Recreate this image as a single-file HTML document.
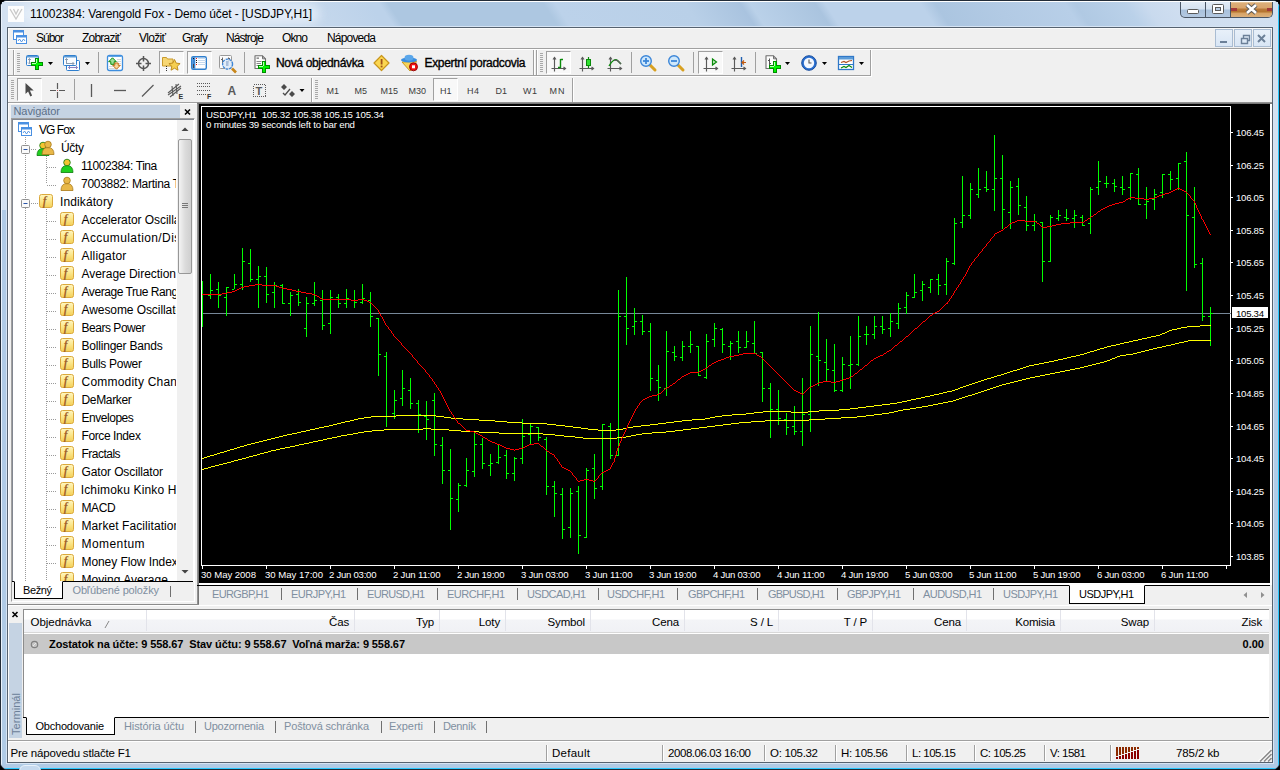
<!DOCTYPE html><html><head><meta charset="utf-8"><title>11002384: Varengold Fox - Demo účet - [USDJPY,H1]</title>
<style>
html,body{margin:0;padding:0;background:#000;}
#w{position:relative;width:1280px;height:770px;overflow:hidden;background:#000;font-family:"Liberation Sans", sans-serif;}
#w div{position:absolute;box-sizing:border-box;}
svg{position:absolute;left:0;top:0;}
svg text{font-family:"Liberation Sans", sans-serif;white-space:pre;}
</style></head><body><div id="w">
<div style="left:0;top:0;width:1280px;height:770px;border:1px solid #222c38;border-radius:7px;background:#b0cbe6;overflow:hidden"><div style="left:0;top:0;width:1278px;height:209px;background:#d3e1f1"></div><div style="left:0;top:0;width:1px;height:768px;background:#e9f2fc"></div><div style="left:0;top:0;width:1278px;height:1px;background:#fff"></div><div style="left:1277px;top:0;width:1px;height:768px;background:#28c8ff"></div><div style="left:0;top:767px;width:1278px;height:1px;background:#28c8ff"></div><div style="left:5px;top:25px;width:1268px;height:738px;border:1px solid #d6e4f4"></div></div>
<div style="left:2px;top:2px;width:1276px;height:24px;overflow:hidden"><div style="left:-22px;top:0;width:1340px;height:24px;transform:skewX(33deg);background:linear-gradient(90deg,#d3e1f1 22px,#d0dff0 272px,#c4d7ec 342px,#bcd2ea 397px,#bcd2ea 406px,#adc7e1 415px,#adc7e1 570px,#bcd2ea 582px,#b9d0e8 712px,#a9c3df 767px,#bad1e9 777px,#aac4df 842px,#bcd2ea 852px,#bcd2ea 947px,#abc5e0 962px,#b2cae4 1022px,#b8cfe8 1092px,#b0c9e3 1102px,#bad1e9 1152px,#c9daee 1172px,#cfdef0 1202px,#d3e1f1 1342px)"></div></div>
<div style="left:20px;top:4px;width:300px;height:20px;border-radius:10px;background:rgba(232,240,249,.75);filter:blur(5px)"></div>
<div style="left:19px;top:765px;width:22px;height:12px;border-radius:11px;border:1px solid #e8f1fb;background:#c6d9ee"></div>
<div style="left:7px;top:27px;width:1266px;height:736px;border:1px solid #56626f;background:#f0f0f0"></div>
<div style="left:8px;top:28px;width:1264px;height:1px;background:#fafafa"></div>
<div style="left:8px;top:28px;width:1px;height:734px;background:#fcfcfc"></div>
<div style="left:8px;top:48px;width:1264px;height:1px;background:#a0a0a0"></div>
<div style="left:8px;top:49px;width:1264px;height:1px;background:#fff"></div>
<div style="left:8px;top:75px;width:863px;height:1px;background:#a0a0a0"></div>
<div style="left:8px;top:76px;width:864px;height:1px;background:#fff"></div>
<div style="left:870px;top:50px;width:1px;height:26px;background:#a0a0a0"></div>
<div style="left:871px;top:50px;width:1px;height:26px;background:#fff"></div>
<div style="left:13px;top:50px;width:1px;height:25px;background:#a0a0a0"></div>
<div style="left:14px;top:50px;width:1px;height:25px;background:#fff"></div>
<div style="left:533px;top:50px;width:1px;height:25px;background:#a0a0a0"></div>
<div style="left:534px;top:50px;width:1px;height:25px;background:#fff"></div>
<div style="left:536px;top:50px;width:1px;height:25px;background:#a0a0a0"></div>
<div style="left:537px;top:50px;width:1px;height:25px;background:#fff"></div>
<div style="left:311px;top:78px;width:1px;height:24px;background:#a0a0a0"></div>
<div style="left:312px;top:78px;width:1px;height:24px;background:#fff"></div>
<div style="left:572px;top:78px;width:1px;height:24px;background:#a0a0a0"></div>
<div style="left:573px;top:78px;width:1px;height:24px;background:#fff"></div>
<div style="left:8px;top:102px;width:1264px;height:1px;background:#a0a0a0"></div>
<div style="left:8px;top:103px;width:189px;height:1px;background:#fff"></div>
<div style="left:159px;top:51px;width:25px;height:23px;background:#f8f8f8;border:1px solid;border-color:#a0a0a0 #fff #fff #a0a0a0"></div>
<div style="left:187px;top:51px;width:25px;height:23px;background:#f8f8f8;border:1px solid;border-color:#a0a0a0 #fff #fff #a0a0a0"></div>
<div style="left:546px;top:51px;width:25px;height:23px;background:#f8f8f8;border:1px solid;border-color:#a0a0a0 #fff #fff #a0a0a0"></div>
<div style="left:698px;top:51px;width:25px;height:23px;background:#f8f8f8;border:1px solid;border-color:#a0a0a0 #fff #fff #a0a0a0"></div>
<div style="left:17px;top:78px;width:25px;height:23px;background:#f8f8f8;border:1px solid;border-color:#a0a0a0 #fff #fff #a0a0a0"></div>
<div style="left:433px;top:78px;width:25px;height:23px;background:#f8f8f8;border:1px solid;border-color:#a0a0a0 #fff #fff #a0a0a0"></div>
<div style="left:11px;top:105px;width:169px;height:13px;background:#c5d3e3"></div>
<div style="left:11px;top:118px;width:184px;height:484px;border:1px solid #a0a0a0;border-color:#a0a0a0 #fff #fff #a0a0a0;background:#f0f0f0"></div>
<div style="left:12px;top:119px;width:182px;height:463px;background:#fff;border:1px solid #828790;border-width:1px 0 0 1px"></div>
<div style="left:177px;top:120px;width:16px;height:461px;background:#f0f0f0"></div>
<div style="left:178px;top:139px;width:14px;height:135px;border:1px solid #979797;border-radius:2px;background:linear-gradient(90deg,#f4f4f4,#dcdcdc 50%,#cfcfcf)"></div>
<div style="left:12px;top:581px;width:181px;height:1px;background:#000"></div>
<div style="left:14px;top:581px;width:49px;height:18px;background:#fff;border:1px solid #000;border-top:1px solid #fff"></div>
<div style="left:197px;top:102px;width:1075px;height:2px;background:linear-gradient(180deg,#a0a0a0,#696969)"></div>
<div style="left:197px;top:104px;width:2px;height:481px;background:linear-gradient(90deg,#a0a0a0,#696969)"></div>
<div style="left:199px;top:104px;width:1071px;height:479px;background:#000"></div>
<div style="left:1270px;top:104px;width:2px;height:481px;background:#fff"></div>
<div style="left:199px;top:583px;width:1073px;height:2px;background:#fff"></div>
<div style="left:197px;top:585px;width:1073px;height:1px;background:#000"></div>
<div style="left:197px;top:586px;width:2px;height:19px;background:linear-gradient(90deg,#a0a0a0,#696969)"></div>
<div style="left:1069px;top:585px;width:76px;height:19px;background:#fff;border:1px solid #000;border-top:1px solid #fff"></div>
<div style="left:8px;top:605px;width:1264px;height:1px;background:#fff"></div>
<div style="left:8px;top:604px;width:191px;height:1px;background:#8c8c8c"></div>
<div style="left:9px;top:623px;width:13px;height:115px;background:#c5d3e3"></div>
<div style="left:23px;top:609px;width:1246px;height:109px;background:#fff;border:1px solid #8c8c8c;border-width:1px 0 0 1px"></div>
<div style="left:24px;top:610px;width:1245px;height:23px;background:linear-gradient(180deg,#fff 0,#fff 9px,#f3f4f7 10px,#f0f1f5 22px);border-bottom:1px solid #d8d8d8"></div>
<div style="left:146px;top:610px;width:1px;height:21px;background:#e2e3ea"></div>
<div style="left:354px;top:610px;width:1px;height:21px;background:#e2e3ea"></div>
<div style="left:439px;top:610px;width:1px;height:21px;background:#e2e3ea"></div>
<div style="left:505px;top:610px;width:1px;height:21px;background:#e2e3ea"></div>
<div style="left:590px;top:610px;width:1px;height:21px;background:#e2e3ea"></div>
<div style="left:684px;top:610px;width:1px;height:21px;background:#e2e3ea"></div>
<div style="left:778px;top:610px;width:1px;height:21px;background:#e2e3ea"></div>
<div style="left:872px;top:610px;width:1px;height:21px;background:#e2e3ea"></div>
<div style="left:966px;top:610px;width:1px;height:21px;background:#e2e3ea"></div>
<div style="left:1060px;top:610px;width:1px;height:21px;background:#e2e3ea"></div>
<div style="left:1154px;top:610px;width:1px;height:21px;background:#e2e3ea"></div>
<div style="left:24px;top:634px;width:1245px;height:20px;background:#c8c8c8"></div>
<div style="left:23px;top:717px;width:1246px;height:1px;background:#000"></div>
<div style="left:26px;top:717px;width:89px;height:18px;background:#fff;border:1px solid #000;border-top:1px solid #fff"></div>
<div style="left:8px;top:740px;width:1264px;height:1px;background:#a0a0a0"></div>
<div style="left:8px;top:741px;width:1264px;height:1px;background:#fff"></div>
<div style="left:546px;top:745px;width:1px;height:16px;background:#a0a0a0"></div><div style="left:547px;top:745px;width:1px;height:16px;background:#fff"></div>
<div style="left:662px;top:745px;width:1px;height:16px;background:#a0a0a0"></div><div style="left:663px;top:745px;width:1px;height:16px;background:#fff"></div>
<div style="left:764px;top:745px;width:1px;height:16px;background:#a0a0a0"></div><div style="left:765px;top:745px;width:1px;height:16px;background:#fff"></div>
<div style="left:835px;top:745px;width:1px;height:16px;background:#a0a0a0"></div><div style="left:836px;top:745px;width:1px;height:16px;background:#fff"></div>
<div style="left:906px;top:745px;width:1px;height:16px;background:#a0a0a0"></div><div style="left:907px;top:745px;width:1px;height:16px;background:#fff"></div>
<div style="left:974px;top:745px;width:1px;height:16px;background:#a0a0a0"></div><div style="left:975px;top:745px;width:1px;height:16px;background:#fff"></div>
<div style="left:1044px;top:745px;width:1px;height:16px;background:#a0a0a0"></div><div style="left:1045px;top:745px;width:1px;height:16px;background:#fff"></div>
<div style="left:1110px;top:745px;width:1px;height:16px;background:#a0a0a0"></div><div style="left:1111px;top:745px;width:1px;height:16px;background:#fff"></div>
<div style="left:1180px;top:2px;width:93px;height:16px;border:1px solid #4a5665;border-top:none;border-radius:0 0 5px 5px;background:linear-gradient(180deg,#e3ecf6 0,#d5e2f0 7px,#a9c1dc 8px,#b4c9e1 15px);overflow:hidden"><div style="left:24px;top:0;width:1px;height:18px;background:#4a5665"></div><div style="left:49px;top:0;width:1px;height:18px;background:#4a5665"></div><div style="left:50px;top:0;width:43px;height:18px;background:linear-gradient(180deg,#f1dcb4 0,#dcae7a 1px,#d9a56c 6px,#b97a3a 7px,#b5742f 10px,#d6a264 11px,#dcb07c 15px)"></div><div style="left:50px;top:6px;width:6px;height:3px;background:#a33a3a"></div><div style="left:86px;top:6px;width:6px;height:3px;background:#a33a3a"></div></div>
<div style="left:1215px;top:29px;width:18px;height:18px;border:1px solid #a9bcd2;background:linear-gradient(180deg,#e8f0f9,#d9e6f5)"></div>
<div style="left:1234px;top:29px;width:18px;height:18px;border:1px solid #a9bcd2;background:linear-gradient(180deg,#e8f0f9,#d9e6f5)"></div>
<div style="left:1253px;top:29px;width:18px;height:18px;border:1px solid #a9bcd2;background:linear-gradient(180deg,#e8f0f9,#d9e6f5)"></div>
<svg width="1280" height="770" viewBox="0 0 1280 770">
<rect x="8" y="6" width="16" height="16" fill="#fdfdfd"/>
<path d="M10 9 L16 19 L22 9 M13.5 9 L16 14 L18.5 9" stroke="#c9c9c9" stroke-width="1.3" fill="none"/>
<text x="30" y="18" font-size="12" fill="#000" textLength="282" lengthAdjust="spacing">11002384: Varengold Fox - Demo účet - [USDJPY,H1]</text>
<rect x="1187.5" y="9.5" width="11" height="4" rx="1" fill="#fff" stroke="#5a5a5a"/>
<rect x="1212.5" y="4.5" width="11" height="9" rx="1" fill="#fff" stroke="#5a5a5a"/><rect x="1215.5" y="7.5" width="5" height="3" fill="#b9cde4" stroke="#5a5a5a"/>
<path d="M1247 5 L1256 13 M1256 5 L1247 13" stroke="#5a5a5a" stroke-width="4.4"/><path d="M1247 5 L1256 13 M1256 5 L1247 13" stroke="#fff" stroke-width="2.6"/>
<rect x="1220" y="41" width="7" height="2" fill="#6c8098"/>
<path d="M1241.5 38.5 h6 v5 h-6 z M1243.5 38 v-2.5 h6 v5 h-2" fill="none" stroke="#6c8098" stroke-width="1.4"/>
<path d="M1258 35 L1265 42 M1265 35 L1258 42" stroke="#6c8098" stroke-width="2"/>
<g transform="translate(13,30)"><rect x="0.5" y="0.5" width="10" height="9" fill="#fff" stroke="#4a90e2"/><rect x="0.5" y="0.5" width="10" height="2" fill="#4a90e2"/><rect x="3.5" y="5.5" width="10" height="8" fill="#fff" stroke="#4a90e2"/><rect x="3.5" y="5.5" width="10" height="2" fill="#4a90e2"/><path d="M5 11 l1.5 -2 l2 3 l2 -3 l1.5 2" stroke="#4a90e2" fill="none" stroke-width="0.9"/></g>
<text x="36" y="42" font-size="12" fill="#000" textLength="28" lengthAdjust="spacing">Súbor</text>
<text x="82" y="42" font-size="12" fill="#000" textLength="39" lengthAdjust="spacing">Zobraziť</text>
<text x="139" y="42" font-size="12" fill="#000" textLength="27" lengthAdjust="spacing">Vložiť</text>
<text x="182" y="42" font-size="12" fill="#000" textLength="26" lengthAdjust="spacing">Grafy</text>
<text x="226" y="42" font-size="12" fill="#000" textLength="38" lengthAdjust="spacing">Nástroje</text>
<text x="282" y="42" font-size="12" fill="#000" textLength="26" lengthAdjust="spacing">Okno</text>
<text x="327" y="42" font-size="12" fill="#000" textLength="49" lengthAdjust="spacing">Nápoveda</text>
<rect x="17" y="53" width="3" height="1" fill="#a8a8a8"/><rect x="17" y="55" width="3" height="1" fill="#a8a8a8"/><rect x="17" y="57" width="3" height="1" fill="#a8a8a8"/><rect x="17" y="59" width="3" height="1" fill="#a8a8a8"/><rect x="17" y="61" width="3" height="1" fill="#a8a8a8"/><rect x="17" y="63" width="3" height="1" fill="#a8a8a8"/><rect x="17" y="65" width="3" height="1" fill="#a8a8a8"/><rect x="17" y="67" width="3" height="1" fill="#a8a8a8"/><rect x="17" y="69" width="3" height="1" fill="#a8a8a8"/><rect x="17" y="71" width="3" height="1" fill="#a8a8a8"/>
<rect x="540" y="53" width="3" height="1" fill="#a8a8a8"/><rect x="540" y="55" width="3" height="1" fill="#a8a8a8"/><rect x="540" y="57" width="3" height="1" fill="#a8a8a8"/><rect x="540" y="59" width="3" height="1" fill="#a8a8a8"/><rect x="540" y="61" width="3" height="1" fill="#a8a8a8"/><rect x="540" y="63" width="3" height="1" fill="#a8a8a8"/><rect x="540" y="65" width="3" height="1" fill="#a8a8a8"/><rect x="540" y="67" width="3" height="1" fill="#a8a8a8"/><rect x="540" y="69" width="3" height="1" fill="#a8a8a8"/><rect x="540" y="71" width="3" height="1" fill="#a8a8a8"/>
<rect x="11" y="80" width="3" height="1" fill="#a8a8a8"/><rect x="11" y="82" width="3" height="1" fill="#a8a8a8"/><rect x="11" y="84" width="3" height="1" fill="#a8a8a8"/><rect x="11" y="86" width="3" height="1" fill="#a8a8a8"/><rect x="11" y="88" width="3" height="1" fill="#a8a8a8"/><rect x="11" y="90" width="3" height="1" fill="#a8a8a8"/><rect x="11" y="92" width="3" height="1" fill="#a8a8a8"/><rect x="11" y="94" width="3" height="1" fill="#a8a8a8"/><rect x="11" y="96" width="3" height="1" fill="#a8a8a8"/><rect x="11" y="98" width="3" height="1" fill="#a8a8a8"/>
<rect x="315" y="80" width="3" height="1" fill="#a8a8a8"/><rect x="315" y="82" width="3" height="1" fill="#a8a8a8"/><rect x="315" y="84" width="3" height="1" fill="#a8a8a8"/><rect x="315" y="86" width="3" height="1" fill="#a8a8a8"/><rect x="315" y="88" width="3" height="1" fill="#a8a8a8"/><rect x="315" y="90" width="3" height="1" fill="#a8a8a8"/><rect x="315" y="92" width="3" height="1" fill="#a8a8a8"/><rect x="315" y="94" width="3" height="1" fill="#a8a8a8"/><rect x="315" y="96" width="3" height="1" fill="#a8a8a8"/><rect x="315" y="98" width="3" height="1" fill="#a8a8a8"/>
<rect x="98" y="52" width="1" height="21" fill="#a0a0a0"/>
<rect x="244" y="52" width="1" height="21" fill="#a0a0a0"/>
<rect x="631" y="52" width="1" height="21" fill="#a0a0a0"/>
<rect x="693" y="52" width="1" height="21" fill="#a0a0a0"/>
<rect x="755" y="52" width="1" height="21" fill="#a0a0a0"/>
<rect x="74" y="79" width="1" height="21" fill="#a0a0a0"/>
<g><rect x="26.500" y="55.500" width="12" height="10" rx="1" fill="#fafcff" stroke="#2f7fce"/><rect x="27" y="56" width="11" height="1.500" fill="#5b9bd8"/><path d="M29.500 58.500 v5 M28 60 l1.500 -1.500 l1.500 1.500 M28 62.500 l1.500 1.500 l1.500 -1.500" stroke="#8a9bb0" fill="none"/></g>
<path d="M35 58h4v4h4v4h-4v4h-4v-4h-4v-4h4z" fill="#008c00"/><path d="M36 59h2v4h4v2h-4v4h-2v-4h-4v-2h4z" fill="#00f400"/><path d="M36 59h1v4h-1z M32 63h4v1h-4z" fill="#b8ffb8"/>
<path d="M48 62 h5 l-2.5 3 z" fill="#000"/>
<g><rect x="66.500" y="60.500" width="13" height="10" rx="1" fill="#fafcff" stroke="#2f7fce"/><rect x="63.500" y="55.500" width="13" height="10" rx="1" fill="#fafcff" stroke="#2f7fce"/><rect x="64" y="56" width="12" height="1.500" fill="#5b9bd8"/><path d="M66.500 58.500 v5.500 M65 60 l1.500 -1.500 l1.500 1.500 M66 63.500 h8 M72.500 62 l1.500 1.500 l-1.500 1.500" stroke="#8a9bb0" fill="none"/><path d="M68.500 67.500 h9 M70 66 l-1.500 1.500 l1.500 1.500 M76 66 l1.500 1.500 l-1.500 1.500" stroke="#8a7fc0" fill="none"/></g>
<path d="M85 62 h5 l-2.5 3 z" fill="#000"/>
<g><rect x="107.500" y="55.500" width="15" height="15" rx="2" fill="#fdfeff" stroke="#3e8ede" stroke-width="1.300"/><rect x="108.500" y="56" width="13" height="1" fill="#5fa3e6"/><path d="M117 59.500 h4 M117 61.500 h4 M109 66.500 h4 M109 68.500 h6 M117 63.500 h4" stroke="#d8d8d8"/><path d="M112.500 57.800 l3.800 3.900 h-2.100 v2.600 h-3.400 v-2.600 h-2.100 z" fill="#9be09b" stroke="#0a8a0a" stroke-width="1"/><path d="M116.500 69.200 l3.800 -3.900 h-2.100 v-2.300 h-3.400 v2.300 h-2.100 z" fill="#f5d8a0" stroke="#c46a10" stroke-width="1"/></g>
<g fill="none" stroke="#555" stroke-width="1.500"><circle cx="143.500" cy="63.500" r="5"/><path d="M143.500 56 v5.500 M143.500 65.500 v5.500 M136 63.500 h5.500 M145.500 63.500 h5.500"/></g>
<g><path d="M162.500 57.500 h4 l1 1.500 h5.500 v7 h-10.500 z" fill="#f7d774" stroke="#c99a2c"/><path d="M174.500 59.500 l1.700 3.600 l3.900 .5 l-2.900 2.700 l.8 3.900 l-3.500 -2 l-3.500 2 l.8 -3.900 l-2.900 -2.700 l3.900 -.5 z" fill="#f6cf52" stroke="#b98618" stroke-width=".9"/><path d="M166.500 66 v5" stroke="#333" stroke-dasharray="1 1"/></g>
<g><rect x="191.700" y="56.700" width="14.600" height="12.600" rx="1.500" fill="#fff" stroke="#2f7fce" stroke-width="1.400"/><rect x="192.300" y="57.300" width="3" height="11.400" fill="#3a86d4"/><rect x="193" y="64" width="1" height="4" fill="#444"/><path d="M198 58.500 h8 M198 60.500 h8 M198 62.500 h8 M198 64.500 h8" stroke="#c5d9ee"/><path d="M193 58.500 h1 M196 60.500 h1 M196 62.500 h1" stroke="#111"/><path d="M196 58.500 h1 M196 64.500 h1" stroke="#f01010"/></g>
<g><rect x="219.500" y="55.500" width="12" height="13" rx="1" fill="#fbfbfb" stroke="#9a9a9a"/><path d="M222.500 57.500 v6 M228.500 57.500 v5 M221 59.500 h1.500 M228.500 58.500 h1.500" stroke="#666"/><path d="M232 68.500 l4 4" stroke="#c8861a" stroke-width="2.600"/><circle cx="227.600" cy="64.100" r="5" fill="#dce9f7" fill-opacity=".85" stroke="#3c86d8" stroke-width="1.300" stroke-dasharray="2.500 1"/><rect x="226" y="61" width="2.500" height="5" fill="#a9bfdc"/></g>
<g transform="translate(254,0)"><path d="M1 55.800 h7.500 l3 3 v9.700 h-10.500 z" fill="#fdfdfd" stroke="#6e6e6e" stroke-width="1.100" stroke-linejoin="round"/><path d="M8.500 55.800 v3 h3" fill="none" stroke="#6e6e6e"/><rect x="2.500" y="57.500" width="2.500" height="1.300" fill="#777"/><path d="M2.500 61.500 h5 M2.500 63.500 h4.500 M2.500 65.500 h2" stroke="#8a8a8a"/></g><path d="M262 61h4v4h4v4h-4v4h-4v-4h-4v-4h4z" fill="#008c00"/><path d="M263 62h2v4h4v2h-4v4h-2v-4h-4v-2h4z" fill="#00f400"/><path d="M263 62h1v4h-1z M259 66h4v1h-4z" fill="#b8ffb8"/>
<text x="276" y="67" font-size="12" fill="#000" textLength="88" lengthAdjust="spacing" stroke="#000" stroke-width=".35">Nová objednávka</text>
<g><path d="M381.500 55.500 l7.500 7.500 l-7.500 7.500 l-7.500 -7.500 z" fill="#fbd650" stroke="#c8951c" stroke-width="1.200" stroke-linejoin="round"/><rect x="380.700" y="59" width="1.800" height="5.500" fill="#a0521a"/><rect x="380.700" y="65.600" width="1.800" height="1.800" fill="#a0521a"/></g>
<g><path d="M402 62 l14.500 -.5 l-3 5 l-3.500 4.500 z" fill="#f7d45a" stroke="#c89a22" stroke-linejoin="round"/><ellipse cx="409" cy="60" rx="8" ry="2.600" fill="#3a8ee0"/><ellipse cx="409" cy="57.800" rx="4.500" ry="3" fill="#5aa6ea"/><circle cx="413.500" cy="66.800" r="4" fill="#f01010" stroke="#900000" stroke-width=".9"/><rect x="412" y="65.300" width="3" height="3" fill="#fff"/></g>
<text x="424.5" y="67" font-size="12" fill="#000" textLength="101" lengthAdjust="spacing" stroke="#000" stroke-width=".35">Expertní poradcovia</text>
<g transform="translate(551,56)" stroke="#5a5a5a" fill="none" stroke-width="1.150"><path d="M3.500 1.500 v14 M0.500 12.500 h14"/><path d="M2 3.500 l1.500 -2 l1.500 2 M12.500 11 l2 1.500 l-2 1.500"/></g>
<path d="M560.500 59 v9 M558 67.500 h2.500 M560.500 59.500 h2.500" stroke="#0a8a0a" stroke-width="1.400" fill="none"/>
<g transform="translate(579,56)" stroke="#5a5a5a" fill="none" stroke-width="1.150"><path d="M3.500 1.500 v14 M0.500 12.500 h14"/><path d="M2 3.500 l1.500 -2 l1.500 2 M12.500 11 l2 1.500 l-2 1.500"/></g>
<path d="M588.500 57 v11" stroke="#0a8a0a" stroke-width="1.200"/><rect x="586.500" y="59.500" width="4" height="6" fill="#2fe02f" stroke="#0a8a0a"/>
<g transform="translate(607,56)" stroke="#5a5a5a" fill="none" stroke-width="1.150"><path d="M3.500 1.500 v14 M0.500 12.500 h14"/><path d="M2 3.500 l1.500 -2 l1.500 2 M12.500 11 l2 1.500 l-2 1.500"/></g>
<path d="M609 66 q5 -9 9 -5 l3 3" stroke="#0a8a0a" stroke-width="1.300" fill="none"/><path d="M614 60.500 q2 -1 4 .5 l3 3" stroke="#5a5a5a" stroke-width="1.300" fill="none"/>
<g transform="translate(640,0)"><path d="M10 65 l5 5" stroke="#d8a020" stroke-width="3" stroke-linecap="round"/><circle cx="6" cy="61" r="5.300" fill="#cfe8fb" stroke="#3c86d8" stroke-width="1.400"/><path d="M3 61 h6" stroke="#3c86d8" stroke-width="1.800"/><path d="M6 58 v6" stroke="#3c86d8" stroke-width="1.800"/></g>
<g transform="translate(668,0)"><path d="M10 65 l5 5" stroke="#d8a020" stroke-width="3" stroke-linecap="round"/><circle cx="6" cy="61" r="5.300" fill="#cfe8fb" stroke="#3c86d8" stroke-width="1.400"/><path d="M3 61 h6" stroke="#3c86d8" stroke-width="1.800"/></g>
<g transform="translate(703,56)" stroke="#5a5a5a" fill="none" stroke-width="1.150"><path d="M3.500 1.500 v14 M0.500 12.500 h14"/><path d="M2 3.500 l1.500 -2 l1.500 2 M12.500 11 l2 1.500 l-2 1.500"/></g>
<path d="M712.500 59 l4 3 l-4 3 z" fill="#c8f0c8" stroke="#0a8a0a" stroke-width="1.200"/>
<g transform="translate(731,56)" stroke="#5a5a5a" fill="none" stroke-width="1.150"><path d="M3.500 1.500 v14 M0.500 12.500 h14"/><path d="M2 3.500 l1.500 -2 l1.500 2 M12.500 11 l2 1.500 l-2 1.500"/></g>
<path d="M741.500 57 v10" stroke="#1f5fb0" stroke-width="1.400"/><path d="M746 62.500 h-4 M744 60.500 l-2 2 l2 2" stroke="#c05a10" stroke-width="1.200" fill="none"/>
<g transform="translate(765,0)"><path d="M1 55.800 h7.500 l3 3 v9.700 h-10.500 z" fill="#fdfdfd" stroke="#6e6e6e" stroke-width="1.100" stroke-linejoin="round"/><path d="M8.500 55.800 v3 h3" fill="none" stroke="#6e6e6e"/><path d="M4.500 58.500 v7 M3 60.500 h1.500 M4.500 63.500 h1.500" stroke="#555"/></g>
<path d="M773 61h4v4h4v4h-4v4h-4v-4h-4v-4h4z" fill="#008c00"/><path d="M774 62h2v4h4v2h-4v4h-2v-4h-4v-2h4z" fill="#00f400"/><path d="M774 62h1v4h-1z M770 66h4v1h-4z" fill="#b8ffb8"/>
<path d="M785 62 h5 l-2.5 3 z" fill="#000"/>
<g><circle cx="809" cy="63" r="7.300" fill="#2a6fd0" stroke="#1a4fa0"/><circle cx="809" cy="63" r="5.200" fill="#f4f8ff"/><path d="M809 59.500 v3.500 h2.500" stroke="#555" fill="none" stroke-width="1.100"/></g>
<path d="M822 62 h5 l-2.5 3 z" fill="#000"/>
<g><rect x="838.500" y="56.500" width="15" height="13" fill="#fff" stroke="#2f78c8" stroke-width="1.300"/><rect x="839" y="57" width="14" height="2.500" fill="#5b9bd8"/><path d="M839 64.500 h14" stroke="#2f78c8"/><path d="M841 62.500 l3 -1 l2 1 l3 -1.500 l3 -.5" stroke="#b05020" fill="none" stroke-width="1.200"/><path d="M841 68 l3 -1.500 l2 1 l3 -2 l3 2" stroke="#0a8a0a" fill="none" stroke-width="1.200"/></g>
<path d="M859 62 h5 l-2.5 3 z" fill="#000"/>
<path d="M25.500 83 v11 l2.600 -2.600 l2.200 5 l1.800 -.8 l-2.200 -5 h3.800 z" fill="#4a4a4a"/>
<path d="M57.500 83 v6 M57.500 92 v6 M50 90.500 h6 M59 90.500 h6" stroke="#5a5a5a" stroke-width="1.200"/><rect x="57" y="90" width="1" height="1" fill="#c06060"/>
<path d="M91.500 84 v13" stroke="#5a5a5a" stroke-width="1.300"/>
<path d="M114 90.500 h12" stroke="#5a5a5a" stroke-width="1.300"/>
<path d="M142 96.500 l11.500 -11.500" stroke="#5a5a5a" stroke-width="1.300"/>
<g stroke="#5a5a5a" stroke-width="1.100" fill="none"><path d="M168 93 l11 -9 M170 97 l11 -9 M168 95 l13 -9"/><path d="M172 86 l1 10 M176 84 l1 10"/></g>
<text x="178.5" y="99" font-size="7" fill="#333" font-weight="bold">E</text>
<g stroke="#5a5a5a" stroke-width="1" stroke-dasharray="1 1"><path d="M197 83.500 h13 M197 86.500 h13 M197 90.500 h13 M197 94.500 h9"/></g>
<text x="207" y="99" font-size="7" fill="#333" font-weight="bold">F</text>
<text x="227.5" y="95" font-size="12" fill="#5a5a5a" font-weight="bold">A</text>
<rect x="253.500" y="84.500" width="12" height="12" fill="none" stroke="#5a5a5a" stroke-dasharray="1 1" shape-rendering="crispEdges"/>
<text x="255.5" y="95" font-size="11" fill="#5a5a5a" font-weight="bold">T</text>
<path d="M281 87 l3 -3 l3 3 l-3 3 z M289 94 l3 -3 l3 3 l-3 3 z" fill="#4a4a4a"/><path d="M283 93 l2 2 l5 -6" stroke="#4a4a4a" fill="none" stroke-width="1.300"/>
<path d="M299.5 89 h5 l-2.5 3 z" fill="#000"/>
<text x="326.5" y="94" font-size="9" fill="#3c3c3c" textLength="12.5" lengthAdjust="spacing">M1</text>
<text x="354.5" y="94" font-size="9" fill="#3c3c3c" textLength="12.5" lengthAdjust="spacing">M5</text>
<text x="380.5" y="94" font-size="9" fill="#3c3c3c" textLength="17.5" lengthAdjust="spacing">M15</text>
<text x="408.5" y="94" font-size="9" fill="#3c3c3c" textLength="17.5" lengthAdjust="spacing">M30</text>
<text x="440" y="94" font-size="9" fill="#3c3c3c" textLength="11.5" lengthAdjust="spacing">H1</text>
<text x="467" y="94" font-size="9" fill="#3c3c3c" textLength="12" lengthAdjust="spacing">H4</text>
<text x="495.5" y="94" font-size="9" fill="#3c3c3c" textLength="11.5" lengthAdjust="spacing">D1</text>
<text x="523" y="94" font-size="9" fill="#3c3c3c" textLength="14" lengthAdjust="spacing">W1</text>
<text x="549.5" y="94" font-size="9" fill="#3c3c3c" textLength="15.0" lengthAdjust="spacing">MN</text>
<text x="13.5" y="115" font-size="11" fill="#5c7089" textLength="46.5" lengthAdjust="spacing">Navigátor</text>
<path d="M185 109.500 l5 5 M190 109.500 l-5 5" stroke="#000" stroke-width="1.600"/>
<path d="M181.500 131 l3.500 -3.500 l3.500 3.500 z" fill="#444"/>
<path d="M181.500 570 h7 l-3.500 3.500 z" fill="#444"/>
<path d="M182 203.500 h6 M182 205.500 h6 M182 207.500 h6" stroke="#777"/>
<clipPath id="navclip"><rect x="13" y="120" width="163" height="461"/></clipPath>
<g clip-path="url(#navclip)">
<g stroke="#9a9a9a" stroke-dasharray="1 1">
<path d="M25.500 137 v8 M25.500 155 v44 M25.500 208 v380"/>
<path d="M46.500 156 v28 M46.500 209 v380"/>
<path d="M31 149.500 h6 M31 203.500 h7"/>
<path d="M47 167.5 h10"/>
<path d="M47 185.5 h10"/>
<path d="M47 221.5 h10"/>
<path d="M47 239.5 h10"/>
<path d="M47 257.5 h10"/>
<path d="M47 275.5 h10"/>
<path d="M47 293.5 h10"/>
<path d="M47 311.5 h10"/>
<path d="M47 329.5 h10"/>
<path d="M47 347.5 h10"/>
<path d="M47 365.5 h10"/>
<path d="M47 383.5 h10"/>
<path d="M47 401.5 h10"/>
<path d="M47 419.5 h10"/>
<path d="M47 437.5 h10"/>
<path d="M47 455.5 h10"/>
<path d="M47 473.5 h10"/>
<path d="M47 491.5 h10"/>
<path d="M47 509.5 h10"/>
<path d="M47 527.5 h10"/>
<path d="M47 545.5 h10"/>
<path d="M47 563.5 h10"/>
<path d="M47 581.5 h10"/>
</g>
<rect x="21.500" y="145.5" width="8" height="8" rx="1" fill="#fafafa" stroke="#919191"/><path d="M23.500 149.5 h4" stroke="#2a55a8" stroke-width="1"/>
<rect x="21.500" y="199.5" width="8" height="8" rx="1" fill="#fafafa" stroke="#919191"/><path d="M23.500 203.5 h4" stroke="#2a55a8" stroke-width="1"/>
<defs><linearGradient id="fg" x1="0" y1="0" x2="0" y2="1"><stop offset="0" stop-color="#fff6c0"/><stop offset=".5" stop-color="#fbe68a"/><stop offset="1" stop-color="#f3cf58"/></linearGradient></defs>
<g transform="translate(18,122)"><rect x="0.5" y="0.5" width="10" height="9" fill="#fff" stroke="#4a90e2"/><rect x="0.5" y="0.5" width="10" height="2" fill="#4a90e2"/><rect x="3.5" y="5.5" width="10" height="8" fill="#fff" stroke="#4a90e2"/><rect x="3.5" y="5.5" width="10" height="2" fill="#4a90e2"/><path d="M5 11 l1.5 -2 l2 3 l2 -3 l1.5 2" stroke="#4a90e2" fill="none" stroke-width="0.9"/></g>
<path d="M37 155.5 q0 -7 6 -7 q6 0 6 7 z" fill="#20d020" stroke="#0a7a0a" stroke-width=".8"/><circle cx="43" cy="145.5" r="3.300" fill="#f4c430" stroke="#0a7a0a" stroke-width=".8"/>
<path d="M42 154.5 q0 -7 6 -7 q6 0 6 7 z" fill="#e8b848" stroke="#a87818" stroke-width=".8"/><circle cx="48" cy="144.5" r="3.300" fill="#e8b848" stroke="#a87818" stroke-width=".8"/>
<path d="M61 172.5 q0 -7 6 -7 q6 0 6 7 z" fill="#20d020" stroke="#0a7a0a" stroke-width=".8"/><circle cx="67" cy="162.5" r="3.300" fill="#f4c430" stroke="#0a7a0a" stroke-width=".8"/>
<path d="M61 190.5 q0 -7 6 -7 q6 0 6 7 z" fill="#e8b848" stroke="#a87818" stroke-width=".8"/><circle cx="67" cy="180.5" r="3.300" fill="#e8b848" stroke="#a87818" stroke-width=".8"/>
<rect x="39.5" y="194.5" width="13" height="13" rx="2" fill="url(#fg)" stroke="#dba93c"/><text x="42.8" y="205" font-size="11.5" font-style="italic" font-weight="bold" fill="#a3642a" style="font-family:'Liberation Serif',serif">f</text>
<rect x="60.5" y="212.5" width="13" height="13" rx="2" fill="url(#fg)" stroke="#dba93c"/><text x="63.8" y="223" font-size="11.5" font-style="italic" font-weight="bold" fill="#a3642a" style="font-family:'Liberation Serif',serif">f</text>
<rect x="60.5" y="230.5" width="13" height="13" rx="2" fill="url(#fg)" stroke="#dba93c"/><text x="63.8" y="241" font-size="11.5" font-style="italic" font-weight="bold" fill="#a3642a" style="font-family:'Liberation Serif',serif">f</text>
<rect x="60.5" y="248.5" width="13" height="13" rx="2" fill="url(#fg)" stroke="#dba93c"/><text x="63.8" y="259" font-size="11.5" font-style="italic" font-weight="bold" fill="#a3642a" style="font-family:'Liberation Serif',serif">f</text>
<rect x="60.5" y="266.5" width="13" height="13" rx="2" fill="url(#fg)" stroke="#dba93c"/><text x="63.8" y="277" font-size="11.5" font-style="italic" font-weight="bold" fill="#a3642a" style="font-family:'Liberation Serif',serif">f</text>
<rect x="60.5" y="284.5" width="13" height="13" rx="2" fill="url(#fg)" stroke="#dba93c"/><text x="63.8" y="295" font-size="11.5" font-style="italic" font-weight="bold" fill="#a3642a" style="font-family:'Liberation Serif',serif">f</text>
<rect x="60.5" y="302.5" width="13" height="13" rx="2" fill="url(#fg)" stroke="#dba93c"/><text x="63.8" y="313" font-size="11.5" font-style="italic" font-weight="bold" fill="#a3642a" style="font-family:'Liberation Serif',serif">f</text>
<rect x="60.5" y="320.5" width="13" height="13" rx="2" fill="url(#fg)" stroke="#dba93c"/><text x="63.8" y="331" font-size="11.5" font-style="italic" font-weight="bold" fill="#a3642a" style="font-family:'Liberation Serif',serif">f</text>
<rect x="60.5" y="338.5" width="13" height="13" rx="2" fill="url(#fg)" stroke="#dba93c"/><text x="63.8" y="349" font-size="11.5" font-style="italic" font-weight="bold" fill="#a3642a" style="font-family:'Liberation Serif',serif">f</text>
<rect x="60.5" y="356.5" width="13" height="13" rx="2" fill="url(#fg)" stroke="#dba93c"/><text x="63.8" y="367" font-size="11.5" font-style="italic" font-weight="bold" fill="#a3642a" style="font-family:'Liberation Serif',serif">f</text>
<rect x="60.5" y="374.5" width="13" height="13" rx="2" fill="url(#fg)" stroke="#dba93c"/><text x="63.8" y="385" font-size="11.5" font-style="italic" font-weight="bold" fill="#a3642a" style="font-family:'Liberation Serif',serif">f</text>
<rect x="60.5" y="392.5" width="13" height="13" rx="2" fill="url(#fg)" stroke="#dba93c"/><text x="63.8" y="403" font-size="11.5" font-style="italic" font-weight="bold" fill="#a3642a" style="font-family:'Liberation Serif',serif">f</text>
<rect x="60.5" y="410.5" width="13" height="13" rx="2" fill="url(#fg)" stroke="#dba93c"/><text x="63.8" y="421" font-size="11.5" font-style="italic" font-weight="bold" fill="#a3642a" style="font-family:'Liberation Serif',serif">f</text>
<rect x="60.5" y="428.5" width="13" height="13" rx="2" fill="url(#fg)" stroke="#dba93c"/><text x="63.8" y="439" font-size="11.5" font-style="italic" font-weight="bold" fill="#a3642a" style="font-family:'Liberation Serif',serif">f</text>
<rect x="60.5" y="446.5" width="13" height="13" rx="2" fill="url(#fg)" stroke="#dba93c"/><text x="63.8" y="457" font-size="11.5" font-style="italic" font-weight="bold" fill="#a3642a" style="font-family:'Liberation Serif',serif">f</text>
<rect x="60.5" y="464.5" width="13" height="13" rx="2" fill="url(#fg)" stroke="#dba93c"/><text x="63.8" y="475" font-size="11.5" font-style="italic" font-weight="bold" fill="#a3642a" style="font-family:'Liberation Serif',serif">f</text>
<rect x="60.5" y="482.5" width="13" height="13" rx="2" fill="url(#fg)" stroke="#dba93c"/><text x="63.8" y="493" font-size="11.5" font-style="italic" font-weight="bold" fill="#a3642a" style="font-family:'Liberation Serif',serif">f</text>
<rect x="60.5" y="500.5" width="13" height="13" rx="2" fill="url(#fg)" stroke="#dba93c"/><text x="63.8" y="511" font-size="11.5" font-style="italic" font-weight="bold" fill="#a3642a" style="font-family:'Liberation Serif',serif">f</text>
<rect x="60.5" y="518.5" width="13" height="13" rx="2" fill="url(#fg)" stroke="#dba93c"/><text x="63.8" y="529" font-size="11.5" font-style="italic" font-weight="bold" fill="#a3642a" style="font-family:'Liberation Serif',serif">f</text>
<rect x="60.5" y="536.5" width="13" height="13" rx="2" fill="url(#fg)" stroke="#dba93c"/><text x="63.8" y="547" font-size="11.5" font-style="italic" font-weight="bold" fill="#a3642a" style="font-family:'Liberation Serif',serif">f</text>
<rect x="60.5" y="554.5" width="13" height="13" rx="2" fill="url(#fg)" stroke="#dba93c"/><text x="63.8" y="565" font-size="11.5" font-style="italic" font-weight="bold" fill="#a3642a" style="font-family:'Liberation Serif',serif">f</text>
<rect x="60.5" y="572.5" width="13" height="13" rx="2" fill="url(#fg)" stroke="#dba93c"/><text x="63.8" y="583" font-size="11.5" font-style="italic" font-weight="bold" fill="#a3642a" style="font-family:'Liberation Serif',serif">f</text>
<text x="39" y="134.4" font-size="12" fill="#000" letter-spacing="-0.938">VG Fox</text>
<text x="61" y="152.4" font-size="12" fill="#000" letter-spacing="-0.333">Účty</text>
<text x="81" y="170.4" font-size="12" fill="#000" letter-spacing="-0.428">11002384: Tina</text>
<text x="81" y="188.4" font-size="12" fill="#000" letter-spacing="-0.278">7003882: Martina T</text>
<text x="60" y="206.4" font-size="12" fill="#000" letter-spacing="0.108">Indikátory</text>
<text x="81.5" y="224.4" font-size="12" fill="#000" letter-spacing="-0.061">Accelerator Oscillat</text>
<text x="81.5" y="242.4" font-size="12" fill="#000" letter-spacing="0.402">Accumulation/Dist</text>
<text x="81.5" y="260.4" font-size="12" fill="#000" letter-spacing="0.180">Alligator</text>
<text x="81.5" y="278.4" font-size="12" fill="#000" letter-spacing="-0.042">Average Directional</text>
<text x="81.5" y="296.4" font-size="12" fill="#000" letter-spacing="-0.445">Average True Range</text>
<text x="81.5" y="314.4" font-size="12" fill="#000" letter-spacing="-0.077">Awesome Oscillator</text>
<text x="81.5" y="332.4" font-size="12" fill="#000" letter-spacing="-0.470">Bears Power</text>
<text x="81.5" y="350.4" font-size="12" fill="#000" letter-spacing="-0.204">Bollinger Bands</text>
<text x="81.5" y="368.4" font-size="12" fill="#000" letter-spacing="-0.296">Bulls Power</text>
<text x="81.5" y="386.4" font-size="12" fill="#000" letter-spacing="0.215">Commodity Chann</text>
<text x="81.5" y="404.4" font-size="12" fill="#000" letter-spacing="-0.341">DeMarker</text>
<text x="81.5" y="422.4" font-size="12" fill="#000" letter-spacing="-0.468">Envelopes</text>
<text x="81.5" y="440.4" font-size="12" fill="#000" letter-spacing="-0.398">Force Index</text>
<text x="81.5" y="458.4" font-size="12" fill="#000" letter-spacing="-0.512">Fractals</text>
<text x="81.5" y="476.4" font-size="12" fill="#000" letter-spacing="-0.117">Gator Oscillator</text>
<text x="80.7" y="494.4" font-size="12" fill="#000" letter-spacing="0.160">Ichimoku Kinko Hy</text>
<text x="81.5" y="512.4" font-size="12" fill="#000" letter-spacing="-0.415">MACD</text>
<text x="81.5" y="530.4" font-size="12" fill="#000" letter-spacing="0.076">Market Facilitation</text>
<text x="81.5" y="548.4" font-size="12" fill="#000" letter-spacing="0.438">Momentum</text>
<text x="81.5" y="566.4" font-size="12" fill="#000" letter-spacing="-0.076">Money Flow Index</text>
<text x="81.5" y="584.4" font-size="12" fill="#000" letter-spacing="0.043">Moving Average</text>
</g>
<text x="23" y="594" font-size="11" fill="#000" textLength="29" lengthAdjust="spacing">Bežný</text>
<text x="72.5" y="594" font-size="11" fill="#7f8fa0" textLength="86.5" lengthAdjust="spacing">Obľúbené položky</text>
<rect x="170" y="586" width="1" height="11" fill="#707070"/>
<g shape-rendering="crispEdges">
<rect x="201.500" y="106.500" width="1029" height="459" fill="none" stroke="#fff"/>
<rect x="1231" y="132" width="2" height="1" fill="#fff"/>
<rect x="1231" y="165" width="2" height="1" fill="#fff"/>
<rect x="1231" y="197" width="2" height="1" fill="#fff"/>
<rect x="1231" y="230" width="2" height="1" fill="#fff"/>
<rect x="1231" y="262" width="2" height="1" fill="#fff"/>
<rect x="1231" y="295" width="2" height="1" fill="#fff"/>
<rect x="1231" y="328" width="2" height="1" fill="#fff"/>
<rect x="1231" y="360" width="2" height="1" fill="#fff"/>
<rect x="1231" y="393" width="2" height="1" fill="#fff"/>
<rect x="1231" y="426" width="2" height="1" fill="#fff"/>
<rect x="1231" y="458" width="2" height="1" fill="#fff"/>
<rect x="1231" y="491" width="2" height="1" fill="#fff"/>
<rect x="1231" y="523" width="2" height="1" fill="#fff"/>
<rect x="1231" y="556" width="2" height="1" fill="#fff"/>
<rect x="202" y="566" width="1" height="3" fill="#fff"/>
<rect x="266" y="566" width="1" height="3" fill="#fff"/>
<rect x="330" y="566" width="1" height="3" fill="#fff"/>
<rect x="394" y="566" width="1" height="3" fill="#fff"/>
<rect x="458" y="566" width="1" height="3" fill="#fff"/>
<rect x="522" y="566" width="1" height="3" fill="#fff"/>
<rect x="586" y="566" width="1" height="3" fill="#fff"/>
<rect x="650" y="566" width="1" height="3" fill="#fff"/>
<rect x="714" y="566" width="1" height="3" fill="#fff"/>
<rect x="778" y="566" width="1" height="3" fill="#fff"/>
<rect x="842" y="566" width="1" height="3" fill="#fff"/>
<rect x="906" y="566" width="1" height="3" fill="#fff"/>
<rect x="970" y="566" width="1" height="3" fill="#fff"/>
<rect x="1034" y="566" width="1" height="3" fill="#fff"/>
<rect x="1098" y="566" width="1" height="3" fill="#fff"/>
<rect x="1162" y="566" width="1" height="3" fill="#fff"/>
<rect x="1226" y="566" width="1" height="3" fill="#fff"/>
<rect x="202" y="313" width="1029" height="1" fill="#778899"/>
<path d="M202.5 281V327M210.5 274V299M208 295.5h2M211 290.5h2M218.5 282V308M216 289.5h2M219 295.5h2M226.5 287V316M224 297.5h2M227 287.5h2M234.5 274V289M232 289.5h2M235 284.5h2M242.5 248V290M240 284.5h2M243 261.5h2M250.5 249V282M248 263.5h2M251 279.5h2M258.5 266V308M256 279.5h2M259 276.5h2M266.5 267V303M264 276.5h2M267 294.5h2M274.5 282V308M272 292.5h2M275 285.5h2M282.5 284V304M280 285.5h2M283 303.5h2M290.5 292V316M288 303.5h2M291 295.5h2M298.5 289V306M296 294.5h2M299 302.5h2M306.5 297V337M304 328.5h2M307 303.5h2M314.5 282V306M312 303.5h2M315 300.5h2M322.5 290V330M320 300.5h2M323 325.5h2M330.5 290V334M328 323.5h2M331 297.5h2M338.5 294V308M336 297.5h2M339 303.5h2M346.5 289V308M344 303.5h2M347 298.5h2M354.5 290V308M355 302.5h2M362.5 284V304M360 302.5h2M363 298.5h2M370.5 292V327M368 300.5h2M371 316.5h2M378.5 318V376M376 318.5h2M379 354.5h2M386.5 352V427M384 356.5h2M387 416.5h2M394.5 390V419M392 413.5h2M395 400.5h2M402.5 370V406M400 398.5h2M403 388.5h2M410.5 378V409M408 390.5h2M411 403.5h2M418.5 400V433M416 403.5h2M419 414.5h2M426.5 401V440M424 416.5h2M427 419.5h2M434.5 393V456M432 400.5h2M435 444.5h2M442.5 437V484M440 445.5h2M443 470.5h2M450.5 449V530M448 470.5h2M451 498.5h2M458.5 483V512M456 499.5h2M459 485.5h2M466.5 458V487M464 485.5h2M467 470.5h2M474.5 432V477M472 471.5h2M475 444.5h2M482.5 438V469M480 444.5h2M483 463.5h2M490.5 454V476M488 465.5h2M491 463.5h2M498.5 445V464M496 462.5h2M499 457.5h2M506.5 450V479M504 455.5h2M507 473.5h2M514.5 457V481M512 473.5h2M515 458.5h2M522.5 419V464M520 458.5h2M523 436.5h2M530.5 424V444M528 434.5h2M531 426.5h2M538.5 427V441M536 427.5h2M539 437.5h2M546.5 437V495M544 439.5h2M547 486.5h2M554.5 481V517M552 486.5h2M555 493.5h2M562.5 488V539M560 494.5h2M563 529.5h2M570.5 488V538M568 527.5h2M571 493.5h2M578.5 486V554M576 491.5h2M579 535.5h2M586.5 468V538M584 537.5h2M587 470.5h2M594.5 454V499M592 468.5h2M595 488.5h2M602.5 424V490M600 486.5h2M603 424.5h2M610.5 423V459M608 426.5h2M611 455.5h2M618.5 290V456M616 455.5h2M619 316.5h2M626.5 277V345M624 316.5h2M627 328.5h2M634.5 308V335M632 326.5h2M635 321.5h2M642.5 315V335M640 321.5h2M643 331.5h2M650.5 323V391M648 331.5h2M651 378.5h2M658.5 365V401M656 380.5h2M659 387.5h2M666.5 331V396M664 388.5h2M667 351.5h2M674.5 346V361M672 352.5h2M675 356.5h2M682.5 341V361M680 357.5h2M683 346.5h2M690.5 331V353M688 346.5h2M691 344.5h2M698.5 346V376M696 346.5h2M699 375.5h2M706.5 334V379M704 377.5h2M707 341.5h2M714.5 323V347M712 339.5h2M715 328.5h2M722.5 328V353M720 329.5h2M723 344.5h2M730.5 341V360M728 346.5h2M731 343.5h2M738.5 331V353M736 341.5h2M739 347.5h2M746.5 331V348M744 347.5h2M747 341.5h2M754.5 321V354M752 343.5h2M755 353.5h2M762.5 352V402M760 352.5h2M763 388.5h2M770.5 383V438M768 388.5h2M771 409.5h2M778.5 390V425M776 409.5h2M779 418.5h2M786.5 413V435M784 419.5h2M787 427.5h2M794.5 406V435M792 426.5h2M795 431.5h2M802.5 378V446M800 431.5h2M803 414.5h2M810.5 326V432M808 414.5h2M811 354.5h2M818.5 312V386M816 356.5h2M819 360.5h2M826.5 339V381M824 362.5h2M827 369.5h2M834.5 344V392M832 370.5h2M835 390.5h2M842.5 357V392M840 390.5h2M843 364.5h2M850.5 336V389M848 365.5h2M851 364.5h2M858.5 316V366M856 364.5h2M859 336.5h2M866.5 326V345M864 334.5h2M867 334.5h2M874.5 316V339M872 334.5h2M875 326.5h2M882.5 316V334M880 326.5h2M883 329.5h2M890.5 313V337M888 328.5h2M891 321.5h2M898.5 303V329M896 323.5h2M899 308.5h2M906.5 292V314M904 307.5h2M907 295.5h2M914.5 274V298M912 297.5h2M915 292.5h2M922.5 281V301M920 290.5h2M923 284.5h2M930.5 279V293M928 287.5h2M931 279.5h2M938.5 274V295M936 279.5h2M939 285.5h2M946.5 258V295M944 284.5h2M947 261.5h2M954.5 218V265M952 263.5h2M955 223.5h2M962.5 176V228M960 222.5h2M963 215.5h2M970.5 183V219M968 215.5h2M971 189.5h2M978.5 168V198M976 194.5h2M979 189.5h2M986.5 171V192M984 187.5h2M987 189.5h2M994.5 135V211M992 189.5h2M995 178.5h2M1002.5 155V229M1000 178.5h2M1003 209.5h2M1010.5 181V229M1008 212.5h2M1011 187.5h2M1018.5 178V215M1016 186.5h2M1019 205.5h2M1026.5 196V231M1024 207.5h2M1027 225.5h2M1034.5 214V231M1032 225.5h2M1035 221.5h2M1042.5 222V282M1040 222.5h2M1043 261.5h2M1050.5 215V262M1048 261.5h2M1051 217.5h2M1058.5 210V221M1056 218.5h2M1059 215.5h2M1066.5 209V221M1064 217.5h2M1067 218.5h2M1074.5 210V228M1072 218.5h2M1075 215.5h2M1082.5 215V226M1080 217.5h2M1083 225.5h2M1090.5 187V234M1088 223.5h2M1091 189.5h2M1098.5 161V195M1096 187.5h2M1099 181.5h2M1106.5 176V188M1104 183.5h2M1107 183.5h2M1114.5 179V192M1112 183.5h2M1115 186.5h2M1122.5 176V195M1120 187.5h2M1123 189.5h2M1130.5 173V200M1128 187.5h2M1131 173.5h2M1138.5 168V205M1136 174.5h2M1139 204.5h2M1146.5 187V219M1144 204.5h2M1147 201.5h2M1154.5 189V210M1152 199.5h2M1155 194.5h2M1162.5 174V198M1160 192.5h2M1163 174.5h2M1170.5 171V190M1168 174.5h2M1171 179.5h2M1178.5 163V190M1176 178.5h2M1179 163.5h2M1186.5 152V291M1184 161.5h2M1187 215.5h2M1194.5 187V268M1192 217.5h2M1195 264.5h2M1202.5 258V321M1200 263.5h2M1203 316.5h2M1210.5 307V346M1208 316.5h2M1211 313.5h2" stroke="#00ff00" stroke-width="1" fill="none"/>
<path d="M202 458.5H204M204 457.5H207M207 456.5H210M210 455.5H214M214 454.5H217M217 453.5H220M220 452.5H224M224 451.5H227M227 450.5H230M230 449.5H234M234 448.5H237M237 447.5H240M240 446.5H244M244 445.5H247M247 444.5H251M251 443.5H255M255 442.5H259M259 441.5H263M263 440.5H267M267 439.5H271M271 438.5H275M275 437.5H279M279 436.5H283M283 435.5H287M287 434.5H292M292 433.5H297M297 432.5H301M301 431.5H306M306 430.5H310M310 429.5H315M315 428.5H319M319 427.5H324M324 426.5H329M329 425.5H333M333 424.5H337M337 423.5H341M341 422.5H345M345 421.5H350M350 420.5H354M354 419.5H358M358 418.5H364M364 417.5H371M371 416.5H396M396 415.5H436M436 416.5H444M444 417.5H451M451 418.5H463M463 419.5H479M479 420.5H495M495 421.5H507M507 422.5H522M522 423.5H547M547 424.5H556M556 425.5H565M565 426.5H573M573 427.5H581M581 428.5H588M588 429.5H598M598 430.5H616M616 429.5H623M623 428.5H627M627 427.5H633M633 426.5H641M641 425.5H650M650 424.5H658M658 423.5H666M666 422.5H674M674 421.5H682M682 420.5H692M692 419.5H705M705 418.5H710M710 417.5H715M715 416.5H722M722 415.5H732M732 414.5H746M746 413.5H754M754 412.5H763M763 411.5H791M791 412.5H808M808 411.5H819M819 410.5H839M839 409.5H850M850 408.5H858M858 407.5H866M866 406.5H874M874 405.5H882M882 404.5H890M890 403.5H897M897 402.5H902M902 401.5H907M907 400.5H911M911 399.5H916M916 398.5H921M921 397.5H925M925 396.5H930M930 395.5H934M934 394.5H939M939 393.5H943M943 392.5H947M947 391.5H952M952 390.5H955M955 389.5H958M958 388.5H960M960 387.5H963M963 386.5H966M966 385.5H969M969 384.5H972M972 383.5H975M975 382.5H978M978 381.5H981M981 380.5H984M984 379.5H987M987 378.5H991M991 377.5H994M994 376.5H997M997 375.5H1001M1001 374.5H1004M1004 373.5H1007M1007 372.5H1010M1010 371.5H1013M1013 370.5H1017M1017 369.5H1020M1020 368.5H1023M1023 367.5H1026M1026 366.5H1029M1029 365.5H1034M1034 364.5H1039M1039 363.5H1044M1044 362.5H1049M1049 361.5H1054M1054 360.5H1058M1058 359.5H1063M1063 358.5H1067M1067 357.5H1071M1071 356.5H1076M1076 355.5H1080M1080 354.5H1084M1084 353.5H1087M1087 352.5H1090M1090 351.5H1094M1094 350.5H1097M1097 349.5H1100M1100 348.5H1104M1104 347.5H1107M1107 346.5H1111M1111 345.5H1116M1116 344.5H1120M1120 343.5H1124M1124 342.5H1129M1129 341.5H1133M1133 340.5H1138M1138 339.5H1142M1142 338.5H1147M1147 337.5H1151M1151 336.5H1156M1156 335.5H1160M1160 334.5H1162M1162 333.5H1165M1165 332.5H1167M1167 331.5H1169M1169 330.5H1172M1172 329.5H1177M1177 328.5H1181M1181 327.5H1187M1187 326.5H1200M1200 325.5H1211" stroke="#ffff00" stroke-width="1" fill="none"/>
<path d="M202 469.5H204M204 468.5H208M208 467.5H211M211 466.5H215M215 465.5H219M219 464.5H223M223 463.5H227M227 462.5H231M231 461.5H234M234 460.5H238M238 459.5H242M242 458.5H246M246 457.5H249M249 456.5H253M253 455.5H257M257 454.5H260M260 453.5H264M264 452.5H268M268 451.5H271M271 450.5H276M276 449.5H280M280 448.5H285M285 447.5H290M290 446.5H295M295 445.5H299M299 444.5H304M304 443.5H309M309 442.5H313M313 441.5H318M318 440.5H323M323 439.5H327M327 438.5H332M332 437.5H337M337 436.5H341M341 435.5H347M347 434.5H353M353 433.5H358M358 432.5H364M364 431.5H372M372 430.5H384M384 429.5H423M423 428.5H431M431 429.5H449M449 430.5H461M461 431.5H479M479 432.5H499M499 433.5H543M543 434.5H555M555 435.5H564M564 436.5H575M575 437.5H583M583 438.5H617M617 437.5H626M626 436.5H631M631 435.5H636M636 434.5H642M642 433.5H652M652 432.5H666M666 431.5H675M675 430.5H683M683 429.5H691M691 428.5H699M699 427.5H707M707 426.5H715M715 425.5H723M723 424.5H731M731 423.5H739M739 422.5H751M751 421.5H765M765 420.5H809M809 419.5H825M825 418.5H841M841 417.5H857M857 416.5H866M866 415.5H874M874 414.5H882M882 413.5H889M889 412.5H894M894 411.5H898M898 410.5H903M903 409.5H910M910 408.5H916M916 407.5H922M922 406.5H928M928 405.5H933M933 404.5H938M938 403.5H943M943 402.5H948M948 401.5H953M953 400.5H956M956 399.5H959M959 398.5H962M962 397.5H965M965 396.5H968M968 395.5H972M972 394.5H975M975 393.5H978M978 392.5H981M981 391.5H984M984 390.5H987M987 389.5H990M990 388.5H993M993 387.5H996M996 386.5H999M999 385.5H1002M1002 384.5H1006M1006 383.5H1010M1010 382.5H1014M1014 381.5H1018M1018 380.5H1022M1022 379.5H1026M1026 378.5H1030M1030 377.5H1035M1035 376.5H1040M1040 375.5H1045M1045 374.5H1050M1050 373.5H1055M1055 372.5H1060M1060 371.5H1065M1065 370.5H1070M1070 369.5H1075M1075 368.5H1080M1080 367.5H1084M1084 366.5H1088M1088 365.5H1092M1092 364.5H1096M1096 363.5H1100M1100 362.5H1104M1104 361.5H1107M1107 360.5H1110M1110 359.5H1112M1112 358.5H1115M1115 357.5H1117M1117 356.5H1120M1120 355.5H1126M1126 354.5H1133M1133 353.5H1137M1137 352.5H1141M1141 351.5H1145M1145 350.5H1149M1149 349.5H1153M1153 348.5H1157M1157 347.5H1162M1162 346.5H1166M1166 345.5H1171M1171 344.5H1175M1175 343.5H1179M1179 342.5H1184M1184 341.5H1188M1188 340.5H1211" stroke="#ffff00" stroke-width="1" fill="none"/>
<path d="M202 294.5H222M222 293.5H227M227 292.5H232M232 291.5H235M235 290.5H237M237 289.5H239M239 288.5H241M241 287.5H244M244 286.5H249M249 285.5H255M255 284.5H262M262 285.5H276M276 286.5H279M279 287.5H282M282 288.5H287M287 289.5H292M292 290.5H296M296 291.5H301M301 292.5H306M306 293.5H312M312 294.5H315M315 295.5H317M317 296.5H319M319 297.5H320M320 298.5H322M322 299.5H351M351 300.5H358M358 299.5H364M364 300.5H367M367 301.5H369M369 302.5H371M371 303.5H372M372 304.5H373M373 305.5H374M374 306.5H375M375 307.5H376M376 308.5H377M377 309.5H378M378.5 310V312M379.5 312V314M380.5 314V316M381 316.5H382M382.5 317V319M383.5 319V321M384.5 321V323M385.5 323V325M386 325.5H387M387 326.5H388M388.5 327V329M389 329.5H390M390 330.5H391M391.5 331V333M392 333.5H393M393.5 334V336M394 336.5H395M395 337.5H396M396 338.5H397M397 339.5H398M398 340.5H399M399 341.5H400M400 342.5H401M401.5 343V345M402 345.5H403M403 346.5H404M404 347.5H405M405 348.5H406M406 349.5H407M407 350.5H408M408 351.5H409M409 352.5H410M410 353.5H411M411 354.5H412M412.5 355V357M413 357.5H414M414 358.5H415M415 359.5H416M416 360.5H417M417.5 361V363M418 363.5H419M419 364.5H420M420 365.5H421M421 366.5H422M422 367.5H423M423 368.5H424M424 369.5H425M425.5 370V372M426 372.5H427M427 373.5H428M428 374.5H429M429.5 375V377M430 377.5H431M431 378.5H432M432.5 379V381M433 381.5H434M434.5 382V384M435 384.5H436M436.5 385V387M437 387.5H438M438.5 388V390M439 390.5H440M440.5 391V393M441.5 393V395M442.5 395V397M443.5 397V399M444.5 399V401M445.5 401V403M446.5 403V405M447.5 405V407M448.5 407V409M449.5 409V411M450 411.5H451M451.5 412V414M452 414.5H453M453.5 415V417M454 417.5H455M455.5 418V420M456 420.5H457M457.5 421V423M458 423.5H460M460 424.5H461M461 425.5H462M462 426.5H463M463 427.5H464M464 428.5H465M465 429.5H466M466 430.5H470M470 431.5H474M474 432.5H476M476 433.5H478M478 434.5H480M480 435.5H482M482 436.5H483M483 437.5H485M485 438.5H487M487 439.5H488M488 440.5H490M490 441.5H492M492 442.5H495M495 443.5H497M497 444.5H500M500 445.5H502M502 446.5H504M504 447.5H506M506 448.5H510M510 449.5H514M514 450.5H515M515 449.5H519M519 448.5H523M523 447.5H525M525 446.5H527M527 445.5H529M529 444.5H534M534 443.5H539M539 444.5H540M540 445.5H541M541 446.5H543M543 447.5H544M544 448.5H545M545 449.5H546M546 450.5H547M547 451.5H549M549 452.5H550M550 453.5H552M552 454.5H554M554.5 455V457M555 457.5H556M556 458.5H557M557.5 459V461M558 461.5H559M559.5 462V464M560 464.5H561M561.5 465V467M562 467.5H564M564 468.5H566M566 469.5H568M568 470.5H570M570 471.5H571M571 472.5H572M572.5 473V475M573 475.5H574M574 476.5H575M575 477.5H576M576.5 478V480M577 480.5H578M578 481.5H580M580 480.5H584M584 479.5H589M589 480.5H593M593 481.5H595M595 480.5H596M596 479.5H597M597 478.5H598M598.5 476V478M599 475.5H600M600 474.5H601M601 473.5H602M602 472.5H604M604 471.5H606M606 470.5H608M608 469.5H610M610.5 467V469M611.5 465V467M612.5 463V465M613 462.5H614M614.5 458V462M615.5 455V458M616.5 451V455M617.5 448V451M618.5 446V448M619.5 443V446M620.5 441V443M621.5 438V441M622.5 436V438M623.5 434V436M624.5 432V434M625.5 430V432M626.5 428V430M627.5 425V428M628.5 423V425M629.5 421V423M630.5 419V421M631.5 417V419M632.5 415V417M633.5 413V415M634.5 411V413M635.5 409V411M636 408.5H637M637.5 406V408M638 405.5H639M639.5 403V405M640 402.5H641M641 401.5H642M642 400.5H643M643 399.5H645M645 398.5H647M647 397.5H649M649 396.5H652M652 395.5H657M657 394.5H659M659 393.5H661M661 392.5H662M662 391.5H663M663 390.5H664M664 389.5H665M665 388.5H667M667 387.5H669M669 386.5H670M670 385.5H672M672 384.5H673M673 383.5H675M675 382.5H676M676 381.5H677M677 380.5H678M678 379.5H680M680 378.5H681M681 377.5H682M682 376.5H684M684 375.5H686M686 374.5H688M688 373.5H690M690 372.5H699M699 371.5H701M701 370.5H703M703 369.5H705M705 368.5H707M707 367.5H708M708 366.5H709M709 365.5H711M711 364.5H712M712 363.5H714M714 362.5H716M716 361.5H718M718 360.5H721M721 359.5H724M724 358.5H726M726 357.5H729M729 356.5H734M734 355.5H739M739 354.5H743M743 353.5H756M756 354.5H757M757 355.5H759M759 356.5H761M761 357.5H762M762 358.5H763M763 359.5H764M764 360.5H765M765 361.5H766M766 362.5H767M767 363.5H768M768 364.5H769M769 365.5H770M770 366.5H771M771 367.5H772M772 368.5H773M773 369.5H774M774 370.5H775M775 371.5H776M776 372.5H777M777 373.5H778M778 374.5H779M779 375.5H780M780 376.5H781M781 377.5H782M782 378.5H783M783 379.5H784M784 380.5H785M785 381.5H786M786 382.5H787M787 383.5H788M788 384.5H789M789 385.5H790M790 386.5H791M791 387.5H792M792 388.5H793M793 389.5H794M794 390.5H796M796 391.5H798M798 392.5H800M800 393.5H802M802 394.5H803M803 393.5H804M804 392.5H805M805 391.5H806M806 390.5H807M807 389.5H808M808 388.5H809M809 387.5H811M811 386.5H813M813 385.5H815M815 384.5H817M817 383.5H819M819 382.5H823M823 381.5H831M831 382.5H836M836 381.5H840M840 380.5H843M843 379.5H846M846 378.5H849M849 377.5H851M851 376.5H853M853 375.5H854M854 374.5H855M855 373.5H857M857 372.5H858M858 371.5H859M859 370.5H860M860 369.5H862M862 368.5H863M863 367.5H864M864 366.5H865M865 365.5H867M867 364.5H868M868 363.5H869M869 362.5H870M870 361.5H871M871 360.5H873M873 359.5H874M874 358.5H876M876 357.5H878M878 356.5H880M880 355.5H883M883 354.5H884M884 353.5H886M886 352.5H887M887 351.5H889M889 350.5H891M891 349.5H892M892 348.5H893M893 347.5H894M894 346.5H895M895 345.5H897M897 344.5H898M898 343.5H899M899 342.5H900M900 341.5H902M902 340.5H903M903 339.5H904M904 338.5H905M905 337.5H906M906 336.5H908M908 335.5H909M909 334.5H910M910 333.5H911M911 332.5H912M912 331.5H913M913 330.5H914M914 329.5H915M915 328.5H917M917 327.5H918M918 326.5H919M919 325.5H920M920 324.5H921M921 323.5H922M922 322.5H923M923 321.5H925M925 320.5H926M926 319.5H927M927 318.5H928M928 317.5H929M929 316.5H930M930 315.5H932M932 314.5H933M933 313.5H935M935 312.5H937M937 311.5H939M939 310.5H940M940 309.5H941M941 308.5H942M942 307.5H943M943 306.5H944M944 305.5H945M945 304.5H946M946 303.5H947M947.5 302V304M948 301.5H949M949.5 299V301M950 298.5H951M951.5 296V298M952 295.5H953M953.5 293V295M954.5 291V293M955 290.5H956M956.5 288V290M957 287.5H958M958.5 285V287M959 284.5H960M960.5 282V284M961.5 280V282M962 279.5H963M963.5 277V279M964 276.5H965M965.5 274V276M966.5 272V274M967.5 270V272M968.5 268V270M969.5 266V268M970 265.5H971M971.5 263V265M972 262.5H973M973 261.5H974M974.5 259V261M975 258.5H976M976 257.5H977M977 256.5H978M978.5 254V256M979 253.5H980M980 252.5H981M981 251.5H982M982.5 249V251M983 248.5H984M984 247.5H985M985 246.5H986M986.5 244V246M987 243.5H988M988 242.5H989M989 241.5H990M990.5 239V241M991 238.5H992M992 237.5H993M993 236.5H994M994.5 234V236M995 233.5H997M997 232.5H999M999 231.5H1001M1001 230.5H1003M1003 229.5H1004M1004 228.5H1005M1005 227.5H1007M1007 226.5H1008M1008 225.5H1009M1009 224.5H1010M1010 223.5H1012M1012 222.5H1015M1015 221.5H1017M1017 220.5H1025M1025 221.5H1036M1036 222.5H1037M1037 223.5H1039M1039 224.5H1040M1040 225.5H1041M1041 226.5H1042M1042 227.5H1047M1047 226.5H1052M1052 225.5H1056M1056 224.5H1061M1061 223.5H1070M1070 222.5H1084M1084 221.5H1085M1085 220.5H1087M1087 219.5H1088M1088 218.5H1090M1090 217.5H1091M1091 216.5H1093M1093 215.5H1094M1094 214.5H1096M1096 213.5H1097M1097 212.5H1098M1098 211.5H1100M1100 210.5H1101M1101 209.5H1103M1103 208.5H1105M1105 207.5H1107M1107 206.5H1109M1109 205.5H1112M1112 204.5H1115M1115 203.5H1119M1119 202.5H1123M1123 201.5H1125M1125 200.5H1126M1126 199.5H1128M1128 198.5H1130M1130 197.5H1135M1135 198.5H1144M1144 199.5H1149M1149 198.5H1155M1155 197.5H1157M1157 196.5H1159M1159 195.5H1162M1162 194.5H1165M1165 193.5H1169M1169 192.5H1171M1171 191.5H1173M1173 190.5H1175M1175 189.5H1177M1177 188.5H1180M1180 189.5H1182M1182 190.5H1184M1184 191.5H1186M1186 192.5H1187M1187 193.5H1188M1188 194.5H1189M1189 195.5H1190M1190.5 196V198M1191 198.5H1192M1192 199.5H1193M1193 200.5H1194M1194.5 201V203M1195.5 203V205M1196.5 205V208M1197.5 208V210M1198.5 210V212M1199.5 212V214M1200.5 214V216M1201.5 216V219M1202 219.5H1203M1203.5 220V222M1204.5 222V224M1205.5 224V226M1206.5 226V228M1207.5 228V230M1208.5 230V232M1209.5 232V234M1210 234.5H1211" stroke="#ff0000" stroke-width="1" fill="none"/>
</g>
<rect x="1232" y="307" width="36" height="11" fill="#fff"/>
<text x="1236" y="316.5" font-size="9.6" fill="#000" textLength="28" lengthAdjust="spacing">105.34</text>
<text x="1236" y="135.5" font-size="9.6" fill="#fff" textLength="28" lengthAdjust="spacing">106.45</text>
<text x="1236" y="168.5" font-size="9.6" fill="#fff" textLength="28" lengthAdjust="spacing">106.25</text>
<text x="1236" y="200.5" font-size="9.6" fill="#fff" textLength="28" lengthAdjust="spacing">106.05</text>
<text x="1236" y="233.5" font-size="9.6" fill="#fff" textLength="28" lengthAdjust="spacing">105.85</text>
<text x="1236" y="265.5" font-size="9.6" fill="#fff" textLength="28" lengthAdjust="spacing">105.65</text>
<text x="1236" y="298.5" font-size="9.6" fill="#fff" textLength="28" lengthAdjust="spacing">105.45</text>
<text x="1236" y="331.5" font-size="9.6" fill="#fff" textLength="28" lengthAdjust="spacing">105.25</text>
<text x="1236" y="363.5" font-size="9.6" fill="#fff" textLength="28" lengthAdjust="spacing">105.05</text>
<text x="1236" y="396.5" font-size="9.6" fill="#fff" textLength="28" lengthAdjust="spacing">104.85</text>
<text x="1236" y="429.5" font-size="9.6" fill="#fff" textLength="28" lengthAdjust="spacing">104.65</text>
<text x="1236" y="461.5" font-size="9.6" fill="#fff" textLength="28" lengthAdjust="spacing">104.45</text>
<text x="1236" y="494.5" font-size="9.6" fill="#fff" textLength="28" lengthAdjust="spacing">104.25</text>
<text x="1236" y="526.5" font-size="9.6" fill="#fff" textLength="28" lengthAdjust="spacing">104.05</text>
<text x="1236" y="559.5" font-size="9.6" fill="#fff" textLength="28" lengthAdjust="spacing">103.85</text>
<text x="201" y="578" font-size="9.6" fill="#fff" textLength="55" lengthAdjust="spacing">30 May 2008</text>
<text x="265" y="578" font-size="9.6" fill="#fff" textLength="58" lengthAdjust="spacing">30 May 17:00</text>
<text x="329" y="578" font-size="9.6" fill="#fff" textLength="47.5" lengthAdjust="spacing">2 Jun 03:00</text>
<text x="393" y="578" font-size="9.6" fill="#fff" textLength="47.5" lengthAdjust="spacing">2 Jun 11:00</text>
<text x="457" y="578" font-size="9.6" fill="#fff" textLength="47.5" lengthAdjust="spacing">2 Jun 19:00</text>
<text x="521" y="578" font-size="9.6" fill="#fff" textLength="47.5" lengthAdjust="spacing">3 Jun 03:00</text>
<text x="585" y="578" font-size="9.6" fill="#fff" textLength="47.5" lengthAdjust="spacing">3 Jun 11:00</text>
<text x="649" y="578" font-size="9.6" fill="#fff" textLength="47.5" lengthAdjust="spacing">3 Jun 19:00</text>
<text x="713" y="578" font-size="9.6" fill="#fff" textLength="47.5" lengthAdjust="spacing">4 Jun 03:00</text>
<text x="777" y="578" font-size="9.6" fill="#fff" textLength="47.5" lengthAdjust="spacing">4 Jun 11:00</text>
<text x="841" y="578" font-size="9.6" fill="#fff" textLength="47.5" lengthAdjust="spacing">4 Jun 19:00</text>
<text x="905" y="578" font-size="9.6" fill="#fff" textLength="47.5" lengthAdjust="spacing">5 Jun 03:00</text>
<text x="969" y="578" font-size="9.6" fill="#fff" textLength="47.5" lengthAdjust="spacing">5 Jun 11:00</text>
<text x="1033" y="578" font-size="9.6" fill="#fff" textLength="47.5" lengthAdjust="spacing">5 Jun 19:00</text>
<text x="1097" y="578" font-size="9.6" fill="#fff" textLength="47.5" lengthAdjust="spacing">6 Jun 03:00</text>
<text x="1161" y="578" font-size="9.6" fill="#fff" textLength="47.5" lengthAdjust="spacing">6 Jun 11:00</text>
<text x="206" y="118" font-size="9.7" fill="#fff" textLength="178" lengthAdjust="spacing">USDJPY,H1  105.32 105.38 105.15 105.34</text>
<text x="206" y="128" font-size="9.7" fill="#fff" textLength="149" lengthAdjust="spacing">0 minutes 39 seconds left to bar end</text>
<text x="212" y="598" font-size="11" fill="#7f8fa0" textLength="57" lengthAdjust="spacing">EURGBP,H1</text>
<text x="291" y="598" font-size="11" fill="#7f8fa0" textLength="55" lengthAdjust="spacing">EURJPY,H1</text>
<text x="367" y="598" font-size="11" fill="#7f8fa0" textLength="58" lengthAdjust="spacing">EURUSD,H1</text>
<text x="447" y="598" font-size="11" fill="#7f8fa0" textLength="58" lengthAdjust="spacing">EURCHF,H1</text>
<text x="527" y="598" font-size="11" fill="#7f8fa0" textLength="59" lengthAdjust="spacing">USDCAD,H1</text>
<text x="607" y="598" font-size="11" fill="#7f8fa0" textLength="58" lengthAdjust="spacing">USDCHF,H1</text>
<text x="688" y="598" font-size="11" fill="#7f8fa0" textLength="57" lengthAdjust="spacing">GBPCHF,H1</text>
<text x="768" y="598" font-size="11" fill="#7f8fa0" textLength="57" lengthAdjust="spacing">GBPUSD,H1</text>
<text x="847" y="598" font-size="11" fill="#7f8fa0" textLength="54" lengthAdjust="spacing">GBPJPY,H1</text>
<text x="923" y="598" font-size="11" fill="#7f8fa0" textLength="59" lengthAdjust="spacing">AUDUSD,H1</text>
<text x="1003" y="598" font-size="11" fill="#7f8fa0" textLength="55" lengthAdjust="spacing">USDJPY,H1</text>
<rect x="281" y="588" width="1" height="12" fill="#707070"/>
<rect x="357" y="588" width="1" height="12" fill="#707070"/>
<rect x="437" y="588" width="1" height="12" fill="#707070"/>
<rect x="517" y="588" width="1" height="12" fill="#707070"/>
<rect x="598" y="588" width="1" height="12" fill="#707070"/>
<rect x="677" y="588" width="1" height="12" fill="#707070"/>
<rect x="757" y="588" width="1" height="12" fill="#707070"/>
<rect x="837" y="588" width="1" height="12" fill="#707070"/>
<rect x="913" y="588" width="1" height="12" fill="#707070"/>
<rect x="993" y="588" width="1" height="12" fill="#707070"/>
<text x="1079" y="598" font-size="11" fill="#000" textLength="55" lengthAdjust="spacing">USDJPY,H1</text>
<path d="M1247 592 v6 l-3.500 -3 z M1261 592 v6 l3.500 -3 z" fill="#909090"/>
<path d="M12.500 612 l5 5 M17.500 612 l-5 5" stroke="#000" stroke-width="1.600"/>
<text x="20" y="735" font-size="11" fill="#6c8098" textLength="42" lengthAdjust="spacing" transform="rotate(-90 20 735)">Terminál</text>
<text x="30.5" y="625.5" font-size="11.5" fill="#000" textLength="61" lengthAdjust="spacing">Objednávka</text>
<path d="M105 628 l4 -7" stroke="#888"/>
<text x="349" y="625.5" font-size="11.5" fill="#000" text-anchor="end" letter-spacing="-0.15">Čas</text>
<text x="434" y="625.5" font-size="11.5" fill="#000" text-anchor="end" letter-spacing="-0.15">Typ</text>
<text x="500" y="625.5" font-size="11.5" fill="#000" text-anchor="end" letter-spacing="-0.15">Loty</text>
<text x="585" y="625.5" font-size="11.5" fill="#000" text-anchor="end" letter-spacing="-0.15">Symbol</text>
<text x="679" y="625.5" font-size="11.5" fill="#000" text-anchor="end" letter-spacing="-0.15">Cena</text>
<text x="773" y="625.5" font-size="11.5" fill="#000" text-anchor="end" letter-spacing="-0.15">S / L</text>
<text x="867" y="625.5" font-size="11.5" fill="#000" text-anchor="end" letter-spacing="-0.15">T / P</text>
<text x="961" y="625.5" font-size="11.5" fill="#000" text-anchor="end" letter-spacing="-0.15">Cena</text>
<text x="1055" y="625.5" font-size="11.5" fill="#000" text-anchor="end" letter-spacing="-0.15">Komisia</text>
<text x="1149" y="625.5" font-size="11.5" fill="#000" text-anchor="end" letter-spacing="-0.15">Swap</text>
<text x="1262" y="625.5" font-size="11.5" fill="#000" text-anchor="end" letter-spacing="-0.15">Zisk</text>
<circle cx="34.500" cy="644.500" r="3.200" fill="#c4c4c4" stroke="#808080" stroke-width="1.200"/><path d="M33 646 l3 -3" stroke="#e8e8e8"/>
<text x="49" y="648" font-size="11" fill="#000" font-weight="bold" textLength="356" lengthAdjust="spacing">Zostatok na účte: 9 558.67  Stav účtu: 9 558.67  Voľná marža: 9 558.67</text>
<text x="1264" y="648" font-size="11" fill="#000" text-anchor="end" font-weight="bold">0.00</text>
<text x="35.5" y="730" font-size="11" fill="#000" textLength="68.5" lengthAdjust="spacing">Obchodovanie</text>
<text x="124" y="730" font-size="11" fill="#7f8fa0" textLength="60" lengthAdjust="spacing">História účtu</text>
<text x="204" y="730" font-size="11" fill="#7f8fa0" textLength="60" lengthAdjust="spacing">Upozornenia</text>
<text x="284" y="730" font-size="11" fill="#7f8fa0" textLength="85" lengthAdjust="spacing">Poštová schránka</text>
<text x="389" y="730" font-size="11" fill="#7f8fa0" textLength="34" lengthAdjust="spacing">Experti</text>
<text x="443" y="730" font-size="11" fill="#7f8fa0" textLength="33" lengthAdjust="spacing">Denník</text>
<rect x="195" y="721" width="1" height="12" fill="#707070"/>
<rect x="275" y="721" width="1" height="12" fill="#707070"/>
<rect x="381" y="721" width="1" height="12" fill="#707070"/>
<rect x="434" y="721" width="1" height="12" fill="#707070"/>
<rect x="486" y="721" width="1" height="12" fill="#707070"/>
<text x="10.5" y="757" font-size="11.5" fill="#000" textLength="120.5" lengthAdjust="spacing">Pre nápovedu stlačte F1</text>
<text x="552" y="757" font-size="11.5" fill="#000" textLength="38" lengthAdjust="spacing">Default</text>
<text x="668" y="757" font-size="11.5" fill="#000" textLength="83" lengthAdjust="spacing">2008.06.03 16:00</text>
<text x="770" y="757" font-size="11.5" fill="#000" textLength="48" lengthAdjust="spacing">O: 105.32</text>
<text x="841" y="757" font-size="11.5" fill="#000" textLength="47" lengthAdjust="spacing">H: 105.56</text>
<text x="912" y="757" font-size="11.5" fill="#000" textLength="44" lengthAdjust="spacing">L: 105.15</text>
<text x="980" y="757" font-size="11.5" fill="#000" textLength="46" lengthAdjust="spacing">C: 105.25</text>
<text x="1050" y="757" font-size="11.5" fill="#000" textLength="36" lengthAdjust="spacing">V: 1581</text>
<text x="1176" y="757" font-size="11.5" fill="#000" textLength="43.5" lengthAdjust="spacing">785/2 kb</text>
<rect x="1116" y="747" width="2" height="9" fill="#8b2a00"/><rect x="1116" y="757" width="2" height="2" fill="#8b0000"/><rect x="1119" y="747" width="2" height="8" fill="#8b2a00"/><rect x="1119" y="756" width="2" height="3" fill="#8b0000"/><rect x="1122" y="747" width="2" height="7" fill="#8b2a00"/><rect x="1122" y="755" width="2" height="4" fill="#8b0000"/><rect x="1125" y="747" width="2" height="6" fill="#8b2a00"/><rect x="1125" y="754" width="2" height="5" fill="#8b0000"/><rect x="1128" y="747" width="2" height="5" fill="#8b2a00"/><rect x="1128" y="753" width="2" height="6" fill="#8b0000"/><rect x="1131" y="747" width="2" height="4" fill="#8b2a00"/><rect x="1131" y="752" width="2" height="7" fill="#8b0000"/><rect x="1134" y="747" width="2" height="3" fill="#8b2a00"/><rect x="1134" y="751" width="2" height="8" fill="#8b0000"/><rect x="1137" y="747" width="2" height="2" fill="#8b2a00"/><rect x="1137" y="750" width="2" height="9" fill="#8b0000"/>
<path d="M1258.500 761.500 l12.500 -12.500 M1262.500 761.500 l8.500 -8.500 M1266.500 761.500 l4.500 -4.500" stroke="#fff" stroke-width="1.700"/><path d="M1260 761.500 l11.500 -11.500 M1264 761.500 l7.500 -7.500 M1268 761.500 l3.500 -3.500" stroke="#8e8e8e" stroke-width="1.700"/>
</svg>
</div></body></html>
